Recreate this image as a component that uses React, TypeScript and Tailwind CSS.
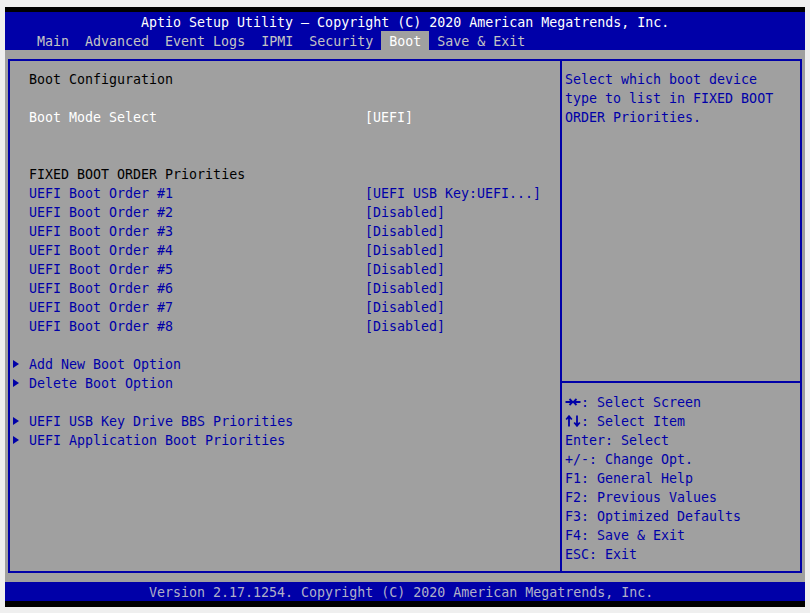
import React from "react";

const BLUE = "#0000a8";

function Tri() {
  return (
    <svg width="6" height="8" viewBox="0 0 6 8" className="block">
      <polygon points="0,0 6,4 0,8" fill={BLUE} />
    </svg>
  );
}

function LeftRight() {
  return (
    <svg width="16" height="12" viewBox="0 0 16 12" className="inline-block align-[-1px]">
      <path d="M0.5 6H7M4.5 3L7.5 6L4.5 9" stroke={BLUE} strokeWidth="1.8" fill="none" />
      <path d="M15.5 6H9M11.5 3L8.5 6L11.5 9" stroke={BLUE} strokeWidth="1.8" fill="none" />
    </svg>
  );
}

function UpDown() {
  return (
    <svg width="16" height="12" viewBox="0 0 16 12" className="inline-block align-[-1px]">
      <path d="M4 11.5V1.5M1.2 4.5L4 1.2L6.8 4.5" stroke={BLUE} strokeWidth="1.8" fill="none" />
      <path d="M12 0.5V10.5M9.2 7.5L12 10.8L14.8 7.5" stroke={BLUE} strokeWidth="1.8" fill="none" />
    </svg>
  );
}

type Row = {
  label?: string;
  value?: string;
  color?: "black" | "white" | "blue";
  arrow?: boolean;
};

const rows: Row[] = [
  { label: "Boot Configuration", color: "black" },
  {},
  { label: "Boot Mode Select", value: "[UEFI]", color: "white" },
  {},
  {},
  { label: "FIXED BOOT ORDER Priorities", color: "black" },
  { label: "UEFI Boot Order #1", value: "[UEFI USB Key:UEFI...]", color: "blue" },
  { label: "UEFI Boot Order #2", value: "[Disabled]", color: "blue" },
  { label: "UEFI Boot Order #3", value: "[Disabled]", color: "blue" },
  { label: "UEFI Boot Order #4", value: "[Disabled]", color: "blue" },
  { label: "UEFI Boot Order #5", value: "[Disabled]", color: "blue" },
  { label: "UEFI Boot Order #6", value: "[Disabled]", color: "blue" },
  { label: "UEFI Boot Order #7", value: "[Disabled]", color: "blue" },
  { label: "UEFI Boot Order #8", value: "[Disabled]", color: "blue" },
  {},
  { label: "Add New Boot Option", color: "blue", arrow: true },
  { label: "Delete Boot Option", color: "blue", arrow: true },
  {},
  { label: "UEFI USB Key Drive BBS Priorities", color: "blue", arrow: true },
  { label: "UEFI Application Boot Priorities", color: "blue", arrow: true },
];

const colorClass = {
  black: "text-black",
  white: "text-white",
  blue: "text-[#0000a8]",
};

const tabs = ["Main", "Advanced", "Event Logs", "IPMI", "Security", "Boot", "Save & Exit"];

const keys: [string, string][] = [
  ["lr", ": Select Screen"],
  ["ud", ": Select Item"],
  ["", "Enter: Select"],
  ["", "+/-: Change Opt."],
  ["", "F1: General Help"],
  ["", "F2: Previous Values"],
  ["", "F3: Optimized Defaults"],
  ["", "F4: Save & Exit"],
  ["", "ESC: Exit"],
];

export default function App() {
  return (
    <div
      className="min-h-screen bg-[#efefef] pl-[5px] pt-[7px] text-[13.3px] leading-[21px] whitespace-pre"
      style={{ fontFamily: '"DejaVu Sans Mono", "Liberation Mono", monospace' }}
    >
      <div className="w-[800px] h-[600px] bg-black pt-[5px] flex flex-col">
        {/* Header */}
        <div className="bg-[#0000a8]">
          <div className="h-[19px] pl-[136px] text-white">
            Aptio Setup Utility – Copyright (C) 2020 American Megatrends, Inc.
          </div>
          <div className="h-[19px] flex pl-[24px]">
            {tabs.map((t) => (
              <div
                key={t}
                className={
                  t === "Boot"
                    ? "px-[8px] bg-[#a0a0a0] text-white"
                    : "px-[8px] text-[#c4c4c4]"
                }
              >
                {t}
              </div>
            ))}
          </div>
        </div>

        {/* Body */}
        <div className="h-[532px] bg-[#a0a0a0] pt-[9px] px-[3px]">
          <div className="h-[514px] border-2 border-[#0000a8] flex">
            {/* Left pane */}
            <div className="w-[550px] pt-[8px] flex flex-col">
              {rows.map((r, i) => (
                <div key={i} className={"h-[19px] flex items-start " + (r.color ? colorClass[r.color] : "")}>
                  <div className="w-[19px] h-[19px] pl-[3px] pt-[1px] flex items-center">{r.arrow ? <Tri /> : null}</div>
                  <div className="w-[336px]">{r.label ?? ""}</div>
                  <div>{r.value ?? ""}</div>
                </div>
              ))}
            </div>
            <div className="w-[2px] bg-[#0000a8]" />
            {/* Right pane */}
            <div className="flex-1 flex flex-col text-[#0000a8]">
              <div className="h-[320px] pt-[8px] pl-[3px]">
                <div className="h-[19px]">Select which boot device</div>
                <div className="h-[19px]">type to list in FIXED BOOT</div>
                <div className="h-[19px]">ORDER Priorities.</div>
              </div>
              <div className="h-[2px] bg-[#0000a8]" />
              <div className="flex-1 pt-[9px] pl-[3px]">
                {keys.map(([a, k]) => (
                  <div key={k} className="h-[19px]">
                    {a === "lr" ? <LeftRight /> : a === "ud" ? <UpDown /> : null}
                    {k}
                  </div>
                ))}
              </div>
            </div>
          </div>
        </div>

        {/* Footer */}
        <div className="h-[19px] bg-[#0000a8] pl-[144px] text-[#b0b0c8]">
          Version 2.17.1254. Copyright (C) 2020 American Megatrends, Inc.
        </div>
      </div>
    </div>
  );
}
